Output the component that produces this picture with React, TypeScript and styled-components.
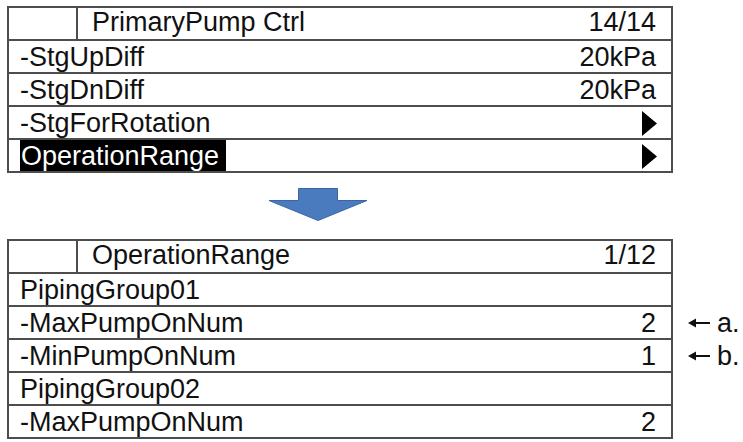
import React from "react";
import styled, { createGlobalStyle } from "styled-components";

const GlobalStyle = createGlobalStyle`
  html, body {
    margin: 0;
    padding: 0;
    background: #ffffff;
  }
  body {
    font-family: "Liberation Sans", Arial, Helvetica, sans-serif;
    color: #111111;
  }
`;

const LINE = "#4d4d4d";

const Page = styled.div`
  display: flex;
  flex-direction: column;
  align-items: flex-start;
  padding: 6px 0 0 7px;
`;

const Section = styled.div`
  display: flex;
  flex-direction: row;
  align-items: flex-start;
`;

const Screen = styled.div`
  width: 666px;
  box-sizing: border-box;
  border: 2px solid ${LINE};
  display: flex;
  flex-direction: column;
  background: #ffffff;
`;

const Row = styled.div`
  height: 31px;
  display: flex;
  align-items: stretch;
  font-size: 27px;
  white-space: nowrap;

  & + & {
    border-top: 2px solid ${LINE};
  }
`;

const IconCell = styled.div`
  width: 67px;
  flex: none;
  border-right: 2px solid ${LINE};
`;

const Title = styled.div`
  flex: 1;
  padding-left: 14px;
  line-height: 28px;
`;

const Label = styled.div<{ $selected?: boolean }>`
  margin-left: 11px;
  padding: 2px ${(p) => (p.$selected ? "7px" : "0")} 0 ${(p) => (p.$selected ? "1px" : "0")};
  line-height: 29px;
  background: ${(p) => (p.$selected ? "#000000" : "transparent")};
  color: ${(p) => (p.$selected ? "#ffffff" : "#111111")};
`;

const Spacer = styled.div`
  flex: 1;
`;

const Value = styled.div<{ $header?: boolean }>`
  padding: ${(p) => (p.$header ? "0" : "2px")} 15px 0 0;
  line-height: ${(p) => (p.$header ? "28px" : "29px")};
`;

const EnterMark = styled.svg`
  flex: none;
  align-self: center;
  margin-right: 14px;
  margin-top: 1px;
`;

const DownArrow = styled.svg`
  display: block;
  margin: 15px 0 18px 261px;
`;

const Notes = styled.div`
  display: flex;
  flex-direction: column;
  gap: 2px;
  padding-top: 2px;
  margin-left: 15px;
`;

const NoteSlot = styled.div`
  height: 31px;
  display: flex;
  align-items: center;
  gap: 7px;
  font-size: 27px;
  line-height: 29px;
  padding-top: 2px;
  box-sizing: border-box;
`;

const PointerArrow = styled.svg`
  flex: none;
  margin-top: -2px;
`;

type Item = { label: string; value?: string; submenu?: boolean; selected?: boolean; note?: string };

const firstMenu: Item[] = [
  { label: "-StgUpDiff", value: "20kPa" },
  { label: "-StgDnDiff", value: "20kPa" },
  { label: "-StgForRotation", submenu: true },
  { label: "OperationRange", submenu: true, selected: true },
];

const secondMenu: Item[] = [
  { label: "PipingGroup01" },
  { label: "-MaxPumpOnNum", value: "2", note: "a." },
  { label: "-MinPumpOnNum", value: "1", note: "b." },
  { label: "PipingGroup02" },
  { label: "-MaxPumpOnNum", value: "2" },
];

const Triangle = () => (
  <EnterMark width="15" height="25" viewBox="0 0 15 25">
    <polygon points="0,0 15,12.5 0,25" fill="#000000" />
  </EnterMark>
);

const Pointer = () => (
  <PointerArrow width="22" height="10" viewBox="0 0 22 10">
    <polygon points="0,5 8,0.5 8,9.5" fill="#111111" />
    <rect x="7" y="4" width="15" height="2" fill="#111111" />
  </PointerArrow>
);

function Menu({ title, page, items }: { title: string; page: string; items: Item[] }) {
  return (
    <Screen>
      <Row>
        <IconCell />
        <Title>{title}</Title>
        <Value $header>{page}</Value>
      </Row>
      {items.map((it, i) => (
        <Row key={i}>
          <Label $selected={it.selected}>{it.label}</Label>
          <Spacer />
          {it.value && <Value>{it.value}</Value>}
          {it.submenu && <Triangle />}
        </Row>
      ))}
    </Screen>
  );
}

export default function App() {
  return (
    <>
      <GlobalStyle />
      <Page>
        <Menu title="PrimaryPump Ctrl" page="14/14" items={firstMenu} />
        <DownArrow width="100" height="33" viewBox="0 0 100 33">
          <polygon
            points="30.5,0.5 69.5,0.5 69.5,12.5 99,12.5 50,32.5 1,12.5 30.5,12.5"
            fill="#4a7bbf"
            stroke="#3a66a2"
            strokeWidth="1"
          />
        </DownArrow>
        <Section>
          <Menu title="OperationRange" page="1/12" items={secondMenu} />
          <Notes>
            <NoteSlot />
            {secondMenu.map((it, i) => (
              <NoteSlot key={i}>
                {it.note && (
                  <>
                    <Pointer />
                    <span>{it.note}</span>
                  </>
                )}
              </NoteSlot>
            ))}
          </Notes>
        </Section>
      </Page>
    </>
  );
}
